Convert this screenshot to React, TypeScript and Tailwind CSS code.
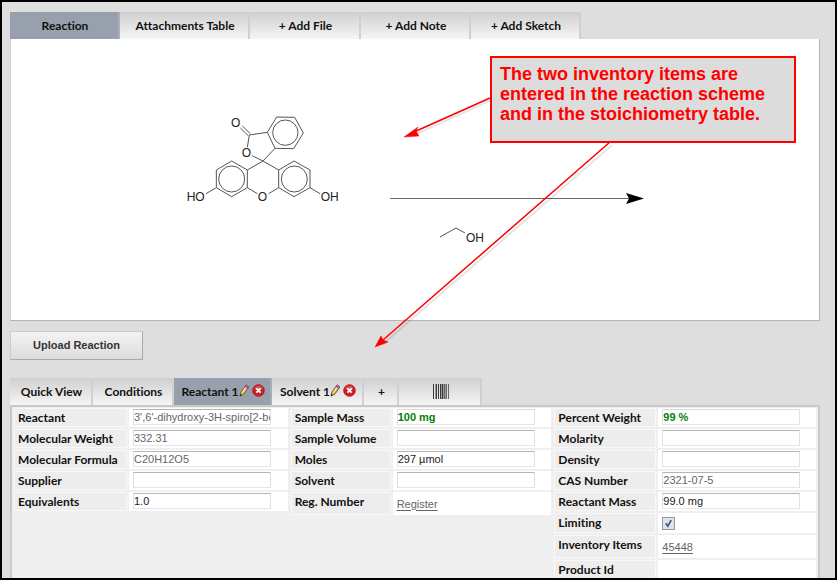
import type { ReactNode } from "react";

const labelFont = "font-['Lato','Noto_Sans',sans-serif] [font-variant-ligatures:none]";
const bodyFont = "font-['Liberation_Sans',Arial,sans-serif]";

function Tab({ width, active, label, children }: { width: string; active?: boolean; label?: string; children: ReactNode }) {
  const look = active
    ? "bg-[#989fad] border-[#a9afba]"
    : "bg-linear-to-b from-[#cfcfcf] to-[#f6f6f6] border-[#d0d0d0]";
  return (
    <button
      type="button"
      aria-label={label}
      className={`${width} ${look} ${labelFont} flex h-[27px] shrink-0 items-center justify-center border-r-2 pt-px pl-[2px] text-xs font-bold whitespace-nowrap text-[#111]`}
    >
      {children}
    </button>
  );
}

function PencilIcon() {
  return (
    <svg viewBox="0 0 10 13" className="mb-[3px] h-[13px] w-[10px]" aria-hidden="true">
      <path d="M1 12 L1.8 8.2 L6 2.2 L9 4.3 L4.8 10.2 Z" fill="#e9b25c" stroke="#70512a" strokeWidth="0.9" />
      <path d="M3.4 8.6 L7 3.4" stroke="#fbe6b0" strokeWidth="1.1" />
      <path d="M6 2.2 L7.1 0.8 L9.8 2.7 L9 4.3 Z" fill="#c263ae" stroke="#7d3b72" strokeWidth="0.7" />
      <path d="M1 12.3 L1.4 10 L3 11.1 Z" fill="#222" />
    </svg>
  );
}

function RemoveIcon() {
  return (
    <svg viewBox="0 0 13 13" className="mb-[3px] h-[13px] w-[13px]" aria-hidden="true">
      <circle cx="6.5" cy="6.5" r="5.8" fill="#cf1f22" stroke="#a90f13" strokeWidth="0.8" />
      <path d="M2 5 A4.8 4.8 0 0 1 11 5 Q6.5 7 2 5Z" fill="#e46a6a" opacity="0.6" />
      <path d="M4.4 4.4 L8.6 8.6 M8.6 4.4 L4.4 8.6" stroke="#fff" strokeWidth="1.9" />
    </svg>
  );
}

function BarcodeIcon() {
  return (
    <svg viewBox="0 0 16 15" className="mb-[2px] h-[15px] w-[16px]" aria-hidden="true">
      <path d="M2 0h1v15h-1z M8 0h1v15h-1z M10 0h4v15h-4z" fill="#999" />
      <path d="M0 0h1v15h-1z M3 0h1v15h-1z M5 0h1v15h-1z M7 0h1v15h-1z M9 0h1v15h-1z" fill="#3a3a3a" />
      <path d="M11 0h1v15h-1z M13 0h1v15h-1z M15 0h1v15h-1z" fill="#666" />
    </svg>
  );
}

type FieldData = { label: string; value?: string; tone?: "muted" | "normal" | "good"; kind?: "link" | "check" | "empty" };

function rowHeight(kind?: FieldData["kind"]) {
  if (kind === "link") return "h-[23px]";
  if (kind === "check") return "h-5";
  return "h-[19px]";
}

function Row({ field, id, labelWidth, children }: { field: FieldData; id: string; labelWidth: string; children: ReactNode }) {
  return (
    <div className={`${rowHeight(field.kind)} flex gap-[2px]`}>
      <label
        htmlFor={id}
        className={`${labelWidth} ${labelFont} shrink-0 border border-[#f8f8f8] bg-[#ededed] pl-[3px] text-xs leading-[18px] font-bold whitespace-nowrap text-[#111]`}
      >
        {field.label}
      </label>
      <div className={`${field.kind ? "items-center" : "items-start pt-px"} flex min-w-0 flex-1 bg-white pl-1`}>{children}</div>
    </div>
  );
}

const tones = {
  muted: "text-[#666] border-t-[#b4b4b4]",
  normal: "text-[#222] border-t-[#b4b4b4]",
  good: "text-[#068006] font-bold border-t-[#d9d9d9]",
};

function Control({ field, id }: { field: FieldData; id: string }) {
  if (field.kind === "empty") return <output id={id} />;
  if (field.kind === "link")
    return (
      <a id={id} href="#" className="text-[11px] leading-3 text-[#666] underline underline-offset-2">
        {field.value}
      </a>
    );
  if (field.kind === "check")
    return (
      <span className="relative h-[13px] w-[13px]">
        <input
          id={id}
          type="checkbox"
          defaultChecked
          className="peer block h-[13px] w-[13px] appearance-none border border-[#999] bg-[#e3e3e6]"
        />
        <svg viewBox="0 0 13 13" className="pointer-events-none absolute inset-0 hidden peer-checked:block" aria-hidden="true">
          <path d="M3.8 6.3 L5.8 9.2 L9.2 3.2" fill="none" stroke="#3a559c" strokeWidth="1.7" />
        </svg>
      </span>
    );
  return (
    <input
      id={id}
      type="text"
      defaultValue={field.value}
      className={`${tones[field.tone ?? "normal"]} h-4 w-[138px] border border-x-[#dde0e8] border-b-[#e3e6ee] bg-white text-[11px] leading-3`}
    />
  );
}

const columns: { labelWidth: string; fields: FieldData[] }[] = [
  {
    labelWidth: "w-[113px]",
    fields: [
      { label: "Reactant", value: "3',6'-dihydroxy-3H-spiro[2-benzofuran-1,9'-xanthen]-3-one", tone: "muted" },
      { label: "Molecular Weight", value: "332.31", tone: "muted" },
      { label: "Molecular Formula", value: "C20H12O5", tone: "muted" },
      { label: "Supplier" },
      { label: "Equivalents", value: "1.0" },
    ],
  },
  {
    labelWidth: "w-[100px]",
    fields: [
      { label: "Sample Mass", value: "100 mg", tone: "good" },
      { label: "Sample Volume" },
      { label: "Moles", value: "297 µmol" },
      { label: "Solvent" },
      { label: "Reg. Number", value: "Register", kind: "link" },
    ],
  },
  {
    labelWidth: "w-[102px]",
    fields: [
      { label: "Percent Weight", value: "99 %", tone: "good" },
      { label: "Molarity" },
      { label: "Density" },
      { label: "CAS Number", value: "2321-07-5", tone: "muted" },
      { label: "Reactant Mass", value: "99.0 mg" },
      { label: "Limiting", kind: "check" },
      { label: "Inventory Items", value: "45448", kind: "link" },
      { label: "Product Id", kind: "empty" },
    ],
  },
];

function ReactionScheme() {
  return (
    <svg viewBox="1 0 809 281" className="h-[281px] w-[809px] font-['Liberation_Sans',Arial,sans-serif]" role="img" aria-label="Reaction scheme">
      <svg x="160" y="61" width="200" height="120" viewBox="0 0 600 360">
        <g fill="none" stroke="#555" strokeWidth="3">
          <path d="M185 183 L232 210 L232 263 L185 290 L139 263 L139 210 Z" />
          <path d="M372 183 L420 210 L420 263 L372 290 L326 263 L326 210 Z" />
          <path d="M320 51 L374 52 L400 99 L371 146 L315 145 L292 97 Z" />
          <circle cx="185" cy="237" r="39" />
          <circle cx="373" cy="237" r="39" />
          <circle cx="346" cy="98" r="38" />
          <path d="M232 210 L279 183 L326 210 M232 263 L262 281 M326 263 L296 281" />
          <path d="M279 183 L315 145 M279 183 L246 167 M232 142 L238 105 L292 97" />
          <path d="M235 107 L211 84 M241 101 L217 78" />
          <path d="M139 263 L108 281 M420 263 L450 281" />
        </g>
        <g fill="#222" fontSize="36">
          <text x="183" y="80">O</text>
          <text x="215" y="172">O</text>
          <text x="263" y="304">O</text>
          <text x="50" y="304">HO</text>
          <text x="452" y="304">OH</text>
        </g>
      </svg>
      <path d="M380 159.5 H626" stroke="#666" />
      <path d="M616 154 L634 159.5 L616 165 L619 159.5 Z" fill="#000" />
      <path d="M430 198 L446 189 L455 194" fill="none" stroke="#555" />
      <text x="456" y="203" fontSize="12" fill="#222">OH</text>
    </svg>
  );
}

function CalloutArrows() {
  return (
    <svg viewBox="2 2 835 578" className="pointer-events-none absolute top-0 left-0 h-[578px] w-[835px]" aria-hidden="true">
      <g fill="none" stroke="#000" strokeWidth="2" opacity="0.1">
        <path d="M491 100 L412 136 M612 145 L382 345" />
      </g>
      <g stroke="#f00" strokeWidth="1.5">
        <path d="M490 98 L414 132 M610 142 L383 340" />
      </g>
      <path d="M404 137 L418 127 L416 131 L419 136 Z M375 347 L381 336 L383 340 L388 342 Z" fill="#f00" stroke="#f00" strokeWidth="0.5" />
    </svg>
  );
}

export default function App() {
  return (
    <div className={`${bodyFont} relative h-screen overflow-hidden border-2 border-black bg-[#dedede]`}>
      <main className="pt-[10px] pr-[15px] pl-2">
        <nav className="flex" aria-label="Reaction sections">
          <Tab width="w-[110px]" active>Reaction</Tab>
          <Tab width="w-[130px]">Attachments Table</Tab>
          <Tab width="w-[111px]">+ Add File</Tab>
          <Tab width="w-[110px]">+ Add Note</Tab>
          <Tab width="w-[110px]">+ Add Sketch</Tab>
        </nav>
        <section className="overflow-hidden border-r border-b border-l border-[#b5b5b5] border-l-[#d0d0d0] bg-white">
          <ReactionScheme />
        </section>
        <button
          type="button"
          className="mt-[10px] h-[29px] w-[133px] border border-[#aaa] border-t-[#ccc] border-l-[#ccc] bg-linear-to-b from-[#f3f3f3] to-[#dcdcdc] text-[11px] font-bold text-[#333]"
        >
          Upload Reaction
        </button>
        <nav className="mt-[18px] flex" aria-label="Stoichiometry">
          <Tab width="w-[83px]">Quick View</Tab>
          <Tab width="w-[81px]">Conditions</Tab>
          <Tab width="w-[98px]" active>Reactant 1<PencilIcon /><span className="w-[3px]" /><RemoveIcon /></Tab>
          <Tab width="w-[92px]">Solvent 1<PencilIcon /><span className="w-[3px]" /><RemoveIcon /></Tab>
          <Tab width="w-[35px]">+</Tab>
          <Tab width="w-[83px]" label="Barcode"><BarcodeIcon /></Tab>
        </nav>
        <form className="grid grid-cols-[274fr_261fr_262fr] gap-[3px] border-2 border-[#c9c9c9] bg-[#efefef] px-[2px] pt-px pb-6">
          {columns.map((column, c) => (
            <div key={c} className="flex min-w-0 flex-col gap-[2px]">
              {column.fields.map((field, r) => {
                const id = `field-${c}-${r}`;
                return (
                  <Row key={id} id={id} field={field} labelWidth={column.labelWidth}>
                    <Control field={field} id={id} />
                  </Row>
                );
              })}
            </div>
          ))}
        </form>
      </main>
      <CalloutArrows />
      <aside className="absolute top-[54px] left-[488px] h-[87px] w-[306px] border-2 border-[#f00] bg-[#dcdcdc] px-2 py-[6px] text-[18px] leading-5 font-bold whitespace-nowrap text-[#f00]">
        The two inventory items are
        <br />
        entered in the reaction scheme
        <br />
        and in the stoichiometry table.
      </aside>
    </div>
  );
}
